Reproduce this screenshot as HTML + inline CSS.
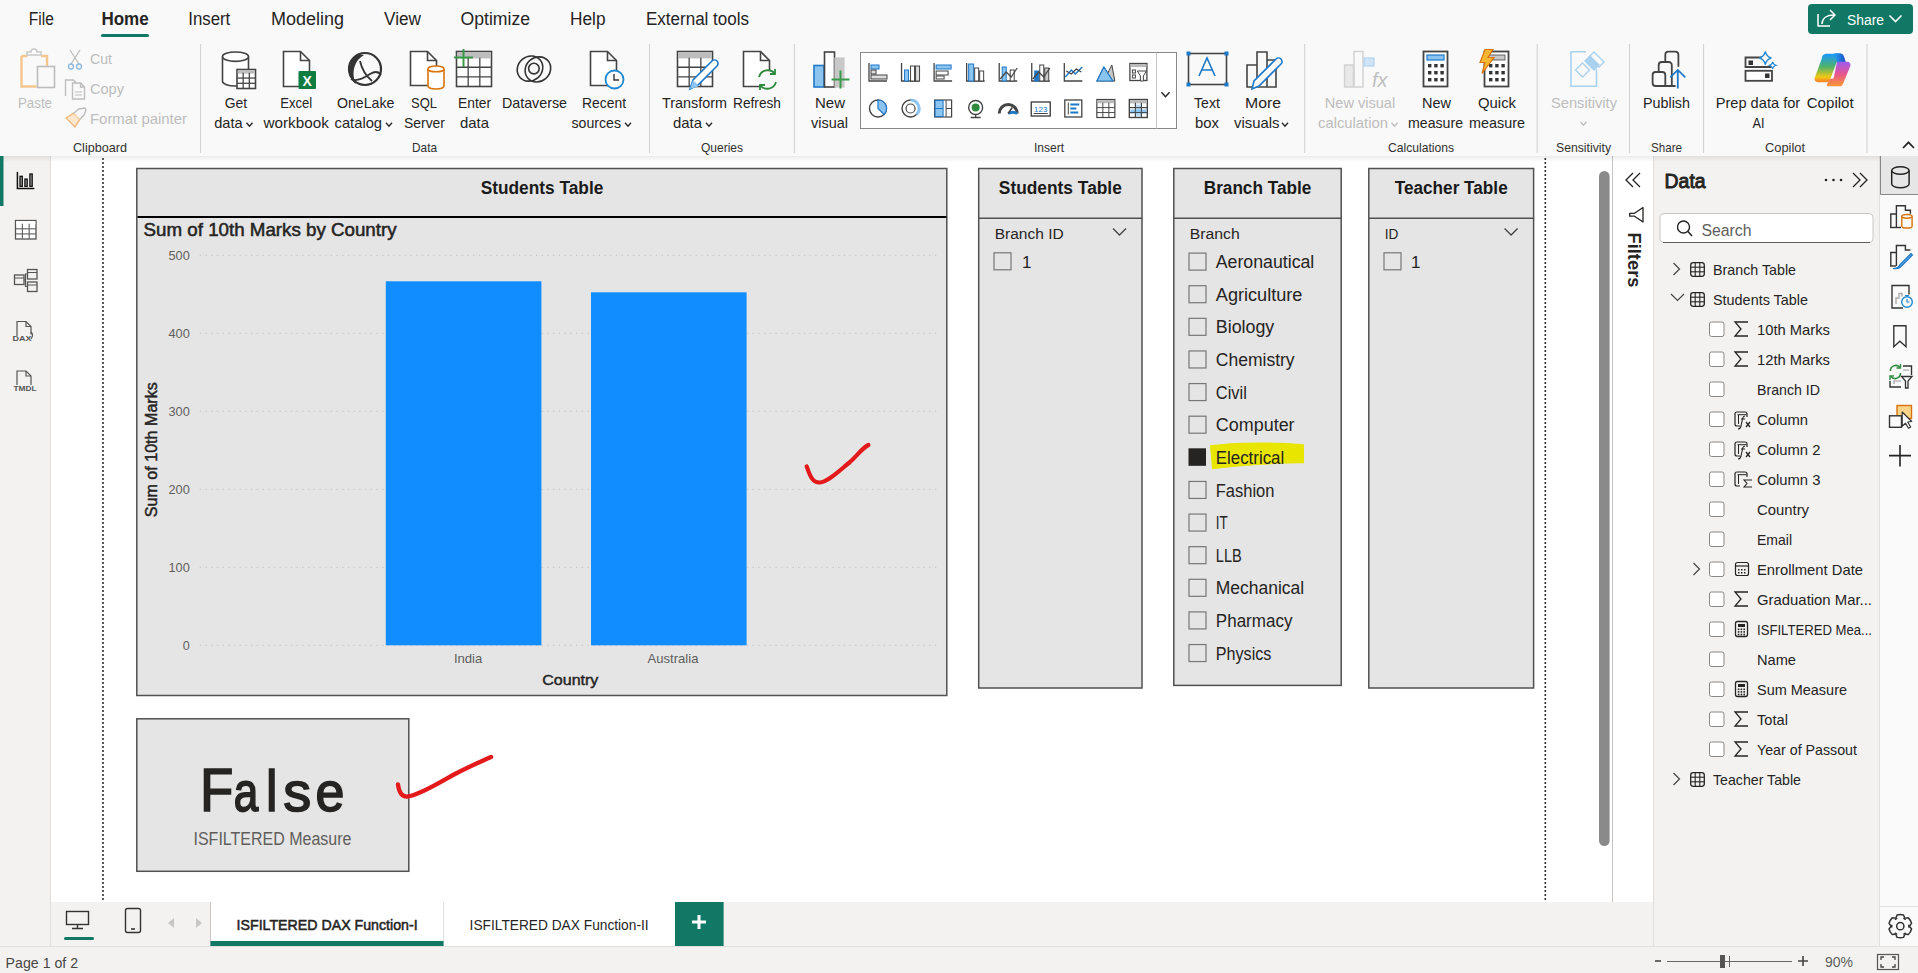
<!DOCTYPE html>
<html><head><meta charset="utf-8"><title>Power BI</title>
<style>
html,body{margin:0;padding:0;width:1918px;height:973px;overflow:hidden;background:#fff}
svg{display:block}
text{font-family:"Liberation Sans", sans-serif}
</style></head><body>
<svg width="1918" height="973" viewBox="0 0 1918 973">
<rect x="0" y="0" width="1918" height="156" fill="#f9f9f9" />
<rect x="0" y="156" width="51" height="790" fill="#f3f2f1" />
<line x1="50.5" y1="156" x2="50.5" y2="946" stroke="#e1dfdd" stroke-width="1" />
<rect x="51" y="156" width="1562" height="746" fill="#ffffff" />
<rect x="1613" y="156" width="40" height="746" fill="#ffffff" />
<line x1="1612.5" y1="156" x2="1612.5" y2="902" stroke="#c8c6c4" stroke-width="1" />
<rect x="1653" y="156" width="227" height="790" fill="#f3f2f1" />
<line x1="1653.5" y1="156" x2="1653.5" y2="946" stroke="#e1dfdd" stroke-width="1" />
<rect x="1880" y="156" width="38" height="790" fill="#fafafa" />
<line x1="1879.5" y1="156" x2="1879.5" y2="946" stroke="#e1dfdd" stroke-width="1" />
<rect x="51" y="902" width="1602" height="44" fill="#f3f2f1" />
<rect x="0" y="946" width="1918" height="27" fill="#f3f2f1" />
<line x1="0" y1="946.5" x2="1918" y2="946.5" stroke="#e1dfdd" stroke-width="1" />
<defs><linearGradient id="sh" x1="0" y1="0" x2="0" y2="1"><stop offset="0" stop-color="#000" stop-opacity="0.08"/><stop offset="1" stop-color="#000" stop-opacity="0"/></linearGradient></defs>
<rect x="0" y="156" width="1880" height="6" fill="url(#sh)" />
<text x="28.8" y="25" font-size="18" fill="#252423" text-anchor="start" textLength="25" lengthAdjust="spacingAndGlyphs" >File</text>
<text x="101.4" y="25" font-size="18" fill="#252423" font-weight="700" text-anchor="start" textLength="47.3" lengthAdjust="spacingAndGlyphs" >Home</text>
<rect x="101" y="34" width="48" height="3" fill="#117865" rx="1.5" />
<text x="188.3" y="25" font-size="18" fill="#252423" text-anchor="start" textLength="42" lengthAdjust="spacingAndGlyphs" >Insert</text>
<text x="271" y="25" font-size="18" fill="#252423" text-anchor="start" textLength="73" lengthAdjust="spacingAndGlyphs" >Modeling</text>
<text x="384" y="25" font-size="18" fill="#252423" text-anchor="start" textLength="37" lengthAdjust="spacingAndGlyphs" >View</text>
<text x="460.5" y="25" font-size="18" fill="#252423" text-anchor="start" textLength="69.5" lengthAdjust="spacingAndGlyphs" >Optimize</text>
<text x="570" y="25" font-size="18" fill="#252423" text-anchor="start" textLength="35.5" lengthAdjust="spacingAndGlyphs" >Help</text>
<text x="646" y="25" font-size="18" fill="#252423" text-anchor="start" textLength="103" lengthAdjust="spacingAndGlyphs" >External tools</text>
<rect x="1808" y="4" width="105" height="30" fill="#117865" rx="4" />
<text x="1847" y="25" font-size="15.5" fill="#ffffff" text-anchor="start" textLength="37" lengthAdjust="spacingAndGlyphs" >Share</text>
<path d="M1889.5,15.5 L1895.5,21.5 L1901.5,15.5" stroke="#ffffff" stroke-width="1.6" fill="none" />
<path d="M1818,14 v12 h12 M1822,24 c0,-6 5,-9 12,-9 M1830,10 l5,5 -5,5" stroke="#ffffff" stroke-width="1.5" fill="none" stroke-linejoin="round"/>
<line x1="200.6" y1="44" x2="200.6" y2="153" stroke="#d2d0ce" stroke-width="1" />
<line x1="649.5" y1="44" x2="649.5" y2="153" stroke="#d2d0ce" stroke-width="1" />
<line x1="794.4" y1="44" x2="794.4" y2="153" stroke="#d2d0ce" stroke-width="1" />
<line x1="1304.7" y1="44" x2="1304.7" y2="153" stroke="#d2d0ce" stroke-width="1" />
<line x1="1537.2" y1="44" x2="1537.2" y2="153" stroke="#d2d0ce" stroke-width="1" />
<line x1="1629.5" y1="44" x2="1629.5" y2="153" stroke="#d2d0ce" stroke-width="1" />
<line x1="1703.6" y1="44" x2="1703.6" y2="153" stroke="#d2d0ce" stroke-width="1" />
<line x1="1867" y1="44" x2="1867" y2="153" stroke="#d2d0ce" stroke-width="1" />
<text x="100" y="152" font-size="12.8" fill="#323130" text-anchor="middle" textLength="54" lengthAdjust="spacingAndGlyphs" >Clipboard</text>
<text x="424.5" y="152" font-size="12.8" fill="#323130" text-anchor="middle" textLength="25" lengthAdjust="spacingAndGlyphs" >Data</text>
<text x="722" y="152" font-size="12.8" fill="#323130" text-anchor="middle" textLength="42" lengthAdjust="spacingAndGlyphs" >Queries</text>
<text x="1049" y="152" font-size="12.8" fill="#323130" text-anchor="middle" textLength="30" lengthAdjust="spacingAndGlyphs" >Insert</text>
<text x="1421" y="152" font-size="12.8" fill="#323130" text-anchor="middle" textLength="66" lengthAdjust="spacingAndGlyphs" >Calculations</text>
<text x="1583.5" y="152" font-size="12.8" fill="#323130" text-anchor="middle" textLength="55" lengthAdjust="spacingAndGlyphs" >Sensitivity</text>
<text x="1666.5" y="152" font-size="12.8" fill="#323130" text-anchor="middle" textLength="31" lengthAdjust="spacingAndGlyphs" >Share</text>
<text x="1785" y="152" font-size="12.8" fill="#323130" text-anchor="middle" textLength="40" lengthAdjust="spacingAndGlyphs" >Copilot</text>
<path d="M1903,148 L1908.5,142.3 L1914,148" stroke="#252423" stroke-width="1.7" fill="none" />
<text x="35" y="108" font-size="14.6" fill="#bdbdbd" text-anchor="middle" textLength="34" lengthAdjust="spacingAndGlyphs" >Paste</text>
<text x="90" y="64" font-size="14.6" fill="#bdbdbd" text-anchor="start" textLength="22" lengthAdjust="spacingAndGlyphs" >Cut</text>
<text x="90" y="94" font-size="14.6" fill="#bdbdbd" text-anchor="start" textLength="34" lengthAdjust="spacingAndGlyphs" >Copy</text>
<text x="90" y="124" font-size="14.6" fill="#bdbdbd" text-anchor="start" textLength="97" lengthAdjust="spacingAndGlyphs" >Format painter</text>
<text x="236" y="108" font-size="14.6" fill="#252423" text-anchor="middle" textLength="22.3" lengthAdjust="spacingAndGlyphs" >Get</text>
<text x="214.2" y="128" font-size="14.6" fill="#252423" text-anchor="start" textLength="28.4" lengthAdjust="spacingAndGlyphs" >data</text>
<path d="M246.5,122.75 L249.5,126.25 L252.5,122.75" stroke="#252423" stroke-width="1.3" fill="none" />
<text x="296.2" y="108" font-size="14.6" fill="#252423" text-anchor="middle" textLength="32" lengthAdjust="spacingAndGlyphs" >Excel</text>
<text x="296.2" y="128" font-size="14.6" fill="#252423" text-anchor="middle" textLength="65.4" lengthAdjust="spacingAndGlyphs" >workbook</text>
<text x="365.7" y="108" font-size="14.6" fill="#252423" text-anchor="middle" textLength="57.4" lengthAdjust="spacingAndGlyphs" >OneLake</text>
<text x="334.6" y="128" font-size="14.6" fill="#252423" text-anchor="start" textLength="47.4" lengthAdjust="spacingAndGlyphs" >catalog</text>
<path d="M386.0,122.75 L389,126.25 L392.0,122.75" stroke="#252423" stroke-width="1.3" fill="none" />
<text x="424" y="108" font-size="14.6" fill="#252423" text-anchor="middle" textLength="26" lengthAdjust="spacingAndGlyphs" >SQL</text>
<text x="424.5" y="128" font-size="14.6" fill="#252423" text-anchor="middle" textLength="41" lengthAdjust="spacingAndGlyphs" >Server</text>
<text x="474.5" y="108" font-size="14.6" fill="#252423" text-anchor="middle" textLength="33" lengthAdjust="spacingAndGlyphs" >Enter</text>
<text x="474.5" y="128" font-size="14.6" fill="#252423" text-anchor="middle" textLength="29" lengthAdjust="spacingAndGlyphs" >data</text>
<text x="534.5" y="108" font-size="14.6" fill="#252423" text-anchor="middle" textLength="65" lengthAdjust="spacingAndGlyphs" >Dataverse</text>
<text x="604" y="108" font-size="14.6" fill="#252423" text-anchor="middle" textLength="44" lengthAdjust="spacingAndGlyphs" >Recent</text>
<text x="571.5" y="128" font-size="14.6" fill="#252423" text-anchor="start" textLength="49.5" lengthAdjust="spacingAndGlyphs" >sources</text>
<path d="M625.0,122.75 L628,126.25 L631.0,122.75" stroke="#252423" stroke-width="1.3" fill="none" />
<text x="694.5" y="108" font-size="14.6" fill="#252423" text-anchor="middle" textLength="65" lengthAdjust="spacingAndGlyphs" >Transform</text>
<text x="673" y="128" font-size="14.6" fill="#252423" text-anchor="start" textLength="29" lengthAdjust="spacingAndGlyphs" >data</text>
<path d="M706.0,122.75 L709,126.25 L712.0,122.75" stroke="#252423" stroke-width="1.3" fill="none" />
<text x="757" y="108" font-size="14.6" fill="#252423" text-anchor="middle" textLength="48" lengthAdjust="spacingAndGlyphs" >Refresh</text>
<text x="830" y="108" font-size="14.6" fill="#252423" text-anchor="middle" textLength="30" lengthAdjust="spacingAndGlyphs" >New</text>
<text x="829.5" y="128" font-size="14.6" fill="#252423" text-anchor="middle" textLength="37" lengthAdjust="spacingAndGlyphs" >visual</text>
<text x="1207" y="108" font-size="14.6" fill="#252423" text-anchor="middle" textLength="26" lengthAdjust="spacingAndGlyphs" >Text</text>
<text x="1207" y="128" font-size="14.6" fill="#252423" text-anchor="middle" textLength="24" lengthAdjust="spacingAndGlyphs" >box</text>
<text x="1263" y="108" font-size="14.6" fill="#252423" text-anchor="middle" textLength="36" lengthAdjust="spacingAndGlyphs" >More</text>
<text x="1234" y="128" font-size="14.6" fill="#252423" text-anchor="start" textLength="45.5" lengthAdjust="spacingAndGlyphs" >visuals</text>
<path d="M1282.0,122.75 L1285,126.25 L1288.0,122.75" stroke="#252423" stroke-width="1.3" fill="none" />
<text x="1360" y="108" font-size="14.6" fill="#bdbdbd" text-anchor="middle" textLength="70.4" lengthAdjust="spacingAndGlyphs" >New visual</text>
<text x="1318" y="128" font-size="14.6" fill="#bdbdbd" text-anchor="start" textLength="70" lengthAdjust="spacingAndGlyphs" >calculation</text>
<path d="M1391.5,122.75 L1394.5,126.25 L1397.5,122.75" stroke="#bdbdbd" stroke-width="1.3" fill="none" />
<text x="1436.5" y="108" font-size="14.6" fill="#252423" text-anchor="middle" textLength="29" lengthAdjust="spacingAndGlyphs" >New</text>
<text x="1435.5" y="128" font-size="14.6" fill="#252423" text-anchor="middle" textLength="55" lengthAdjust="spacingAndGlyphs" >measure</text>
<text x="1497" y="108" font-size="14.6" fill="#252423" text-anchor="middle" textLength="38" lengthAdjust="spacingAndGlyphs" >Quick</text>
<text x="1497" y="128" font-size="14.6" fill="#252423" text-anchor="middle" textLength="56" lengthAdjust="spacingAndGlyphs" >measure</text>
<text x="1584" y="108" font-size="14.6" fill="#bdbdbd" text-anchor="middle" textLength="66" lengthAdjust="spacingAndGlyphs" >Sensitivity</text>
<path d="M1580.5,121.75 L1583.5,125.25 L1586.5,121.75" stroke="#bdbdbd" stroke-width="1.3" fill="none" />
<text x="1666.5" y="108" font-size="14.6" fill="#252423" text-anchor="middle" textLength="47" lengthAdjust="spacingAndGlyphs" >Publish</text>
<text x="1715.7" y="108" font-size="14.6" fill="#252423" text-anchor="start" textLength="84.5" lengthAdjust="spacingAndGlyphs" >Prep data for</text>
<text x="1758.5" y="128" font-size="14.6" fill="#252423" text-anchor="middle" textLength="12" lengthAdjust="spacingAndGlyphs" >AI</text>
<text x="1806.7" y="108" font-size="14.6" fill="#252423" text-anchor="start" textLength="47" lengthAdjust="spacingAndGlyphs" >Copilot</text>
<path d="M21.5,56 h6 M41,56 h6 v10 M21.5,56 v30.5 h15" stroke="#f5c78f" stroke-width="2.4" fill="none" />
<path d="M27,55 h14 v-3 h-4 a3,3 0 0 0 -6,0 h-4 z" stroke="#c8c8c8" stroke-width="1.5" fill="#ffffff" />
<rect x="37.5" y="66.5" width="17" height="21" fill="#f9f9f9" stroke="#bdbdbd" stroke-width="1.6" />
<path d="M70,50 L79,64 M80,50 L71,64" stroke="#bdbdbd" stroke-width="1.3" fill="none" />
<circle cx="71" cy="66.5" r="2.5" stroke="#8fb8de" stroke-width="1.3" fill="none"/><circle cx="79" cy="66.5" r="2.5" stroke="#8fb8de" stroke-width="1.3" fill="none"/>
<path d="M65.5,96 v-16 h8 l3,3" stroke="#bdbdbd" stroke-width="1.4" fill="none" />
<path d="M72.5,83 h8 l4,4 v12 h-12 z" stroke="#bdbdbd" stroke-width="1.4" fill="#f9f9f9" />
<path d="M80.5,83 v4 h4" stroke="#bdbdbd" stroke-width="1.4" fill="none" />
<line x1="75" y1="92" x2="82" y2="92" stroke="#bdbdbd" stroke-width="1" />
<line x1="75" y1="95" x2="82" y2="95" stroke="#bdbdbd" stroke-width="1" />
<path d="M66,118 l8,-5 l6,6 l-5,8 z" stroke="#f0b77c" stroke-width="1.4" fill="#fde6cc" />
<path d="M74,113 l5,-4 l6,-1 l1,2 l-2,5 l-4,4" stroke="#bdbdbd" stroke-width="1.4" fill="#f9f9f9" />
<path d="M222.5,56.68 v24.64 a13.0,4.68 0 0 0 26,0 v-24.64" stroke="#444444" stroke-width="1.6" fill="#ffffff" />
<ellipse cx="235.5" cy="56.68" rx="13.0" ry="4.68" stroke="#444444" stroke-width="1.6" fill="#ffffff"/>
<rect x="237" y="69.5" width="18.5" height="19" fill="#ffffff" stroke="#444444" stroke-width="1.6" />
<rect x="237.8" y="70.3" width="16.9" height="3.3249999999999997" fill="#bdbdbd" />
<line x1="243.16666666666666" y1="72.825" x2="243.16666666666666" y2="88.5" stroke="#444444" stroke-width="1.2800000000000002" />
<line x1="249.33333333333334" y1="72.825" x2="249.33333333333334" y2="88.5" stroke="#444444" stroke-width="1.2800000000000002" />
<line x1="237" y1="78.05" x2="255.5" y2="78.05" stroke="#444444" stroke-width="1.2800000000000002" />
<line x1="237" y1="83.275" x2="255.5" y2="83.275" stroke="#444444" stroke-width="1.2800000000000002" />
<path d="M283.5,51.5 h17 l9,9 v26 h-26 z" stroke="#444444" stroke-width="1.6" fill="#ffffff" />
<path d="M300.5,51.5 v9 h9" stroke="#444444" stroke-width="1.6" fill="none" />
<rect x="298.5" y="71" width="17.5" height="18" fill="#107c41" rx="1" />
<text x="307.2" y="86" font-size="14" fill="#ffffff" font-weight="700" text-anchor="middle" >X</text>
<circle cx="365" cy="69" r="16" stroke="#333" stroke-width="2.2" fill="none"/>
<path d="M358,54 C348,58 347,78 356,84 C352,76 352,62 364,55 Z" stroke="none" stroke-width="1" fill="#333" />
<path d="M360,61 C362,70 366,76 372,81 M351,79 C356,82 364,78 370,74 C375,71 379,72 381,75" stroke="#333" stroke-width="1.8" fill="none" />
<path d="M410.5,51.5 h17 l9,9 v25 h-26 z" stroke="#444444" stroke-width="1.6" fill="#ffffff" />
<path d="M427.5,51.5 v9 h9" stroke="#444444" stroke-width="1.6" fill="none" />
<path d="M428,68.88 v17.240000000000002 a8.0,2.88 0 0 0 16,0 v-17.240000000000002" stroke="#d9730d" stroke-width="1.6" fill="#ffffff" />
<ellipse cx="436.0" cy="68.88" rx="8.0" ry="2.88" stroke="#d9730d" stroke-width="1.6" fill="#ffffff"/>
<rect x="456.5" y="51.5" width="35" height="35" fill="#ffffff" stroke="#444444" stroke-width="1.6" />
<rect x="457.3" y="52.3" width="33.4" height="6.125" fill="#bdbdbd" />
<line x1="468.1666666666667" y1="57.625" x2="468.1666666666667" y2="86.5" stroke="#444444" stroke-width="1.2800000000000002" />
<line x1="479.8333333333333" y1="57.625" x2="479.8333333333333" y2="86.5" stroke="#444444" stroke-width="1.2800000000000002" />
<line x1="456.5" y1="67.25" x2="491.5" y2="67.25" stroke="#444444" stroke-width="1.2800000000000002" />
<line x1="456.5" y1="76.875" x2="491.5" y2="76.875" stroke="#444444" stroke-width="1.2800000000000002" />
<path d="M454,57.5 h19 M463.5,49 v18" stroke="#3a9a4a" stroke-width="2" fill="none" />
<circle cx="533.9" cy="68.6" r="5.3" stroke="#333" stroke-width="1.6" fill="none"/>
<ellipse cx="530" cy="68.6" rx="13.3" ry="12" transform="rotate(-40 530 68.6)" stroke="#333" stroke-width="1.6" fill="none"/>
<ellipse cx="537.9" cy="69.4" rx="13.3" ry="12" transform="rotate(-40 537.9 69.4)" stroke="#333" stroke-width="1.6" fill="none"/>
<path d="M590.5,51.5 h17 l9,9 v25 h-26 z" stroke="#444444" stroke-width="1.6" fill="#ffffff" />
<path d="M607.5,51.5 v9 h9" stroke="#444444" stroke-width="1.6" fill="none" />
<circle cx="614.5" cy="79.5" r="9" stroke="#1e88d2" stroke-width="1.8" fill="#ffffff"/>
<path d="M614,74 v6 h5" stroke="#333" stroke-width="1.4" fill="none" />
<rect x="677.5" y="51.5" width="35" height="35" fill="#ffffff" stroke="#444444" stroke-width="1.6" />
<rect x="678.3" y="52.3" width="33.4" height="6.125" fill="#bdbdbd" />
<line x1="689.1666666666666" y1="57.625" x2="689.1666666666666" y2="86.5" stroke="#444444" stroke-width="1.2800000000000002" />
<line x1="700.8333333333334" y1="57.625" x2="700.8333333333334" y2="86.5" stroke="#444444" stroke-width="1.2800000000000002" />
<line x1="677.5" y1="67.25" x2="712.5" y2="67.25" stroke="#444444" stroke-width="1.2800000000000002" />
<line x1="677.5" y1="76.875" x2="712.5" y2="76.875" stroke="#444444" stroke-width="1.2800000000000002" />
<path d="M690,89 l3,-9 l19,-19 a3,3 0 0 1 5,5 l-19,19 z" stroke="#1e78c8" stroke-width="1.6" fill="#ffffff" />
<path d="M690,89 l3,-9 l6,6 z" stroke="none" stroke-width="1" fill="#8cc4f0" />
<path d="M743.5,51.5 h17 l9,9 v26 h-26 z" stroke="#444444" stroke-width="1.6" fill="#ffffff" />
<path d="M760.5,51.5 v9 h9" stroke="#444444" stroke-width="1.6" fill="none" />
<circle cx="767.5" cy="79.5" r="9.5" fill="#f9f9f9"/>
<path d="M759,77 a9,9 0 0 1 16,-3 M776,82 a9,9 0 0 1 -16,3" stroke="#2e8b3e" stroke-width="1.8" fill="none" />
<path d="M775,69 v5 h-5 M760,90 v-5 h5" stroke="#2e8b3e" stroke-width="1.8" fill="none" />
<rect x="814" y="65.5" width="10" height="21.5" fill="#8cc4f0" stroke="#1e78c8" stroke-width="1.6" />
<rect x="824.5" y="52" width="10" height="35" fill="#ffffff" stroke="#444444" stroke-width="1.6" />
<rect x="835" y="58" width="9" height="29" fill="#c8c8c8" stroke="#c8c8c8" stroke-width="1.2" />
<path d="M831.5,79.5 h18 M840.5,70.5 v18" stroke="#3a9a4a" stroke-width="2" fill="none" />
<rect x="860.5" y="52.5" width="316" height="76" fill="#ffffff" stroke="#8a8886" stroke-width="1" />
<line x1="1156.5" y1="52.5" x2="1156.5" y2="128.5" stroke="#c8c6c4" stroke-width="1" />
<path d="M1161.5,92.25 L1165.5,96.75 L1169.5,92.25" stroke="#252423" stroke-width="1.4" fill="none" />
<path d="M869.0,63 v18 h18" stroke="#444444" stroke-width="1.3" fill="none" />
<rect x="871.0" y="65" width="8" height="4" fill="#8cc4f0" stroke="#1e78c8" stroke-width="1" />
<rect x="871.0" y="70" width="5" height="4" fill="#ddd" stroke="#444444" stroke-width="1" />
<rect x="871.0" y="75" width="16" height="4" fill="#ddd" stroke="#444444" stroke-width="1" />
<path d="M901.55,63 v18 h18" stroke="#444444" stroke-width="1.3" fill="none" />
<rect x="904.55" y="70" width="4" height="11" fill="#8cc4f0" stroke="#1e78c8" stroke-width="1" />
<rect x="910.55" y="66" width="4" height="15" fill="#fff" stroke="#444444" stroke-width="1" />
<rect x="915.55" y="66" width="4" height="15" fill="#ddd" stroke="#444444" stroke-width="1" />
<path d="M934.1,63 v18 h18" stroke="#444444" stroke-width="1.3" fill="none" />
<rect x="936.1" y="65" width="15" height="4" fill="#8cc4f0" stroke="#1e78c8" stroke-width="1" />
<rect x="936.1" y="71" width="12" height="4" fill="#fff" stroke="#444444" stroke-width="1" />
<rect x="936.1" y="76" width="8" height="3" fill="#fff" stroke="#444444" stroke-width="1" />
<path d="M966.65,63 v18 h18" stroke="#444444" stroke-width="1.3" fill="none" />
<rect x="968.65" y="64" width="5" height="17" fill="#8cc4f0" stroke="#1e78c8" stroke-width="1" />
<rect x="974.65" y="68" width="4" height="13" fill="#fff" stroke="#444444" stroke-width="1" />
<rect x="979.65" y="71" width="4" height="10" fill="#fff" stroke="#444444" stroke-width="1" />
<path d="M999.2,63 v18 h18" stroke="#444444" stroke-width="1.3" fill="none" />
<rect x="1002.2" y="67" width="4" height="14" fill="#8cc4f0" stroke="#1e78c8" stroke-width="1" />
<rect x="1010.2" y="70" width="4" height="11" fill="#fff" stroke="#444444" stroke-width="1" />
<path d="M1000.2,79 l6,-7 l5,5 l6,-9" stroke="#444444" stroke-width="1.2" fill="none" />
<path d="M1031.75,63 v18 h18" stroke="#444444" stroke-width="1.3" fill="none" />
<rect x="1034.75" y="71" width="4" height="10" fill="#1e78c8" stroke="#1e78c8" stroke-width="1" />
<rect x="1039.75" y="65" width="4" height="16" fill="#fff" stroke="#444444" stroke-width="1" />
<rect x="1044.75" y="68" width="4" height="13" fill="#ccc" stroke="#444444" stroke-width="1" />
<path d="M1032.75,79 l6,-7 l5,5 l6,-9" stroke="#444444" stroke-width="1.2" fill="none" />
<path d="M1064.3,63 v18 h18" stroke="#444444" stroke-width="1.3" fill="none" />
<path d="M1065.3,77 l6,-7 l4,4 l7,-7" stroke="#1e78c8" stroke-width="1.4" fill="none" />
<path d="M1066.3,71 l5,3 l5,-5 l5,3" stroke="#444444" stroke-width="1.2" fill="none" />
<path d="M1096.85,81 l7,-14 l4,6 l4,-8 l3,16 z" stroke="#444444" stroke-width="1" fill="#c8c8c8" />
<path d="M1096.85,81 l7,-14 l9,14 z" stroke="#1e78c8" stroke-width="1.2" fill="#8cc4f0" />
<rect x="1129.9" y="63.5" width="17" height="17" fill="#fff" stroke="#444444" stroke-width="1.3" />
<rect x="1130.4" y="64" width="16" height="3" fill="#bbb" />
<path d="M1137.4,71 h9 l-3,5 v5 h-3 v-5 z" stroke="#444444" stroke-width="1" fill="#fff" />
<rect x="1132.4" y="70" width="3" height="3" fill="#fff" stroke="#444444" stroke-width="1" />
<rect x="1132.4" y="75" width="3" height="3" fill="#fff" stroke="#444444" stroke-width="1" />
<circle cx="878.0" cy="108.5" r="8.5" stroke="#444444" stroke-width="1.4" fill="#fff"/>
<path d="M878.0,108.5 v-8.5 a8.5,8.5 0 0 1 6,14.5 z" stroke="#1e78c8" stroke-width="1.2" fill="#8cc4f0" />
<circle cx="910.55" cy="108.5" r="8.5" stroke="#444444" stroke-width="1.4" fill="#fff"/><circle cx="910.55" cy="108.5" r="4.5" stroke="#444444" stroke-width="1.2" fill="#fff"/>
<path d="M910.55,100.0 a8.5,8.5 0 0 1 6,14.5" stroke="#8cc4f0" stroke-width="3" fill="none" />
<rect x="934.6" y="100.0" width="17" height="17" fill="#fff" stroke="#444444" stroke-width="1.2" />
<rect x="935.1" y="100.5" width="8" height="16" fill="#8cc4f0" stroke="#1e78c8" stroke-width="1" />
<line x1="935.1" y1="108.5" x2="943.1" y2="108.5" stroke="#1e78c8" stroke-width="1" />
<line x1="946.1" y1="100.5" x2="946.1" y2="116.5" stroke="#444444" stroke-width="1" />
<line x1="946.1" y1="108.5" x2="951.1" y2="108.5" stroke="#444444" stroke-width="1" />
<circle cx="975.65" cy="107.5" r="7" stroke="#444444" stroke-width="1.4" fill="#fff"/><circle cx="975.65" cy="107.5" r="4" fill="#2e8b3e"/>
<path d="M970.65,117.5 h10 M975.65,114.5 v3" stroke="#444444" stroke-width="1.3" fill="none" />
<path d="M999.2,113.5 a9,9 0 0 1 18,0" stroke="#444444" stroke-width="3" fill="none" />
<path d="M1008.2,113.5 a9,9 0 0 1 9,0" stroke="#1e78c8" stroke-width="3" fill="none" />
<line x1="1008.2" y1="113.5" x2="1012.2" y2="107.5" stroke="#444444" stroke-width="1.6" />
<rect x="1031.25" y="102.0" width="19" height="14" fill="#fff" stroke="#444444" stroke-width="1.4" />
<text x="1040.75" y="111.5" font-size="8" fill="#1e78c8" text-anchor="middle" >123</text>
<line x1="1033.75" y1="113.5" x2="1047.75" y2="113.5" stroke="#444444" stroke-width="1" />
<rect x="1064.8" y="100.0" width="17" height="17" fill="#fff" stroke="#444444" stroke-width="1.3" />
<line x1="1068.3" y1="102.5" x2="1068.3" y2="114.5" stroke="#444444" stroke-width="1" />
<rect x="1070.3" y="103.5" width="9" height="2" fill="#1e78c8" />
<rect x="1070.3" y="107.5" width="6" height="2" fill="#1e78c8" />
<rect x="1070.3" y="111.5" width="8" height="2" fill="#1e78c8" />
<rect x="1096.85" y="99.5" width="18" height="18" fill="#ffffff" stroke="#444444" stroke-width="1.2" />
<rect x="1097.4499999999998" y="100.1" width="16.8" height="3.15" fill="#bbb" />
<line x1="1102.85" y1="102.65" x2="1102.85" y2="117.5" stroke="#444444" stroke-width="0.96" />
<line x1="1108.85" y1="102.65" x2="1108.85" y2="117.5" stroke="#444444" stroke-width="0.96" />
<line x1="1096.85" y1="107.60000000000001" x2="1114.85" y2="107.60000000000001" stroke="#444444" stroke-width="0.96" />
<line x1="1096.85" y1="112.55000000000001" x2="1114.85" y2="112.55000000000001" stroke="#444444" stroke-width="0.96" />
<rect x="1129.4" y="99.5" width="18" height="18" fill="#ffffff" stroke="#444444" stroke-width="1.2" />
<rect x="1130.0" y="100.1" width="16.8" height="3.15" fill="#bbb" />
<line x1="1135.4" y1="102.65" x2="1135.4" y2="117.5" stroke="#444444" stroke-width="0.96" />
<line x1="1141.4" y1="102.65" x2="1141.4" y2="117.5" stroke="#444444" stroke-width="0.96" />
<line x1="1129.4" y1="107.60000000000001" x2="1147.4" y2="107.60000000000001" stroke="#444444" stroke-width="0.96" />
<line x1="1129.4" y1="112.55000000000001" x2="1147.4" y2="112.55000000000001" stroke="#444444" stroke-width="0.96" />
<rect x="1130.4" y="109.5" width="16" height="4" fill="#8cc4f0" />
<rect x="1135.4" y="104.5" width="6" height="12" fill="#8cc4f0" opacity="0.6"/>
<rect x="1129.4" y="99.5" width="18" height="18" fill="none" stroke="#444444" stroke-width="1.2" />
<rect x="1130.0" y="100.1" width="16.8" height="3.15" fill="#bbb" />
<line x1="1135.4" y1="102.65" x2="1135.4" y2="117.5" stroke="#444444" stroke-width="0.96" />
<line x1="1141.4" y1="102.65" x2="1141.4" y2="117.5" stroke="#444444" stroke-width="0.96" />
<line x1="1129.4" y1="107.60000000000001" x2="1147.4" y2="107.60000000000001" stroke="#444444" stroke-width="0.96" />
<line x1="1129.4" y1="112.55000000000001" x2="1147.4" y2="112.55000000000001" stroke="#444444" stroke-width="0.96" />
<rect x="1188.5" y="53.5" width="38" height="31" fill="none" stroke="#444444" stroke-width="1.6" />
<rect x="1186.5" y="51.5" width="4" height="4" fill="#1e78c8" />
<rect x="1224.5" y="51.5" width="4" height="4" fill="#1e78c8" />
<rect x="1186.5" y="82.5" width="4" height="4" fill="#1e78c8" />
<rect x="1224.5" y="82.5" width="4" height="4" fill="#1e78c8" />
<path d="M1199,76 L1207,58 L1215,76 M1202,70 h10" stroke="#1e78c8" stroke-width="1.6" fill="none" />
<path d="M1247,87 v-22 h10 v22 z M1257,87 v-35 h10 v35 M1267,60 h9 v27 h-29" stroke="#444444" stroke-width="1.6" fill="none" />
<path d="M1252,89 l2,-8 l22,-22 a3,3 0 0 1 5,5 l-22,22 z" stroke="#1e78c8" stroke-width="1.6" fill="#f9f9f9" />
<rect x="1344.5" y="65" width="9" height="22" fill="#e8e8e8" stroke="#d0d0d0" stroke-width="1.4" />
<rect x="1354" y="51.5" width="9" height="35.5" fill="none" stroke="#d0d0d0" stroke-width="1.4" />
<rect x="1364" y="58" width="10" height="8" fill="#cfe4f7" stroke="#a8cdef" stroke-width="1" />
<text x="1372" y="87" font-size="20" fill="#c0c0c0" text-anchor="start" font-style="italic" font-family="Liberation Serif, serif">fx</text>
<rect x="1423.5" y="51.5" width="24" height="35" fill="#ffffff" stroke="#444444" stroke-width="1.8" />
<rect x="1427" y="55" width="17" height="5" fill="#8cc4f0" stroke="#1e78c8" stroke-width="1.2" />
<rect x="1428.0" y="64" width="3.4" height="3.4" fill="#333" />
<rect x="1434.2" y="64" width="3.4" height="3.4" fill="#333" />
<rect x="1440.4" y="64" width="3.4" height="3.4" fill="#333" />
<rect x="1428.0" y="71" width="3.4" height="3.4" fill="#333" />
<rect x="1434.2" y="71" width="3.4" height="3.4" fill="#333" />
<rect x="1440.4" y="71" width="3.4" height="3.4" fill="#333" />
<rect x="1428.0" y="78" width="3.4" height="3.4" fill="#333" />
<rect x="1434.2" y="78" width="3.4" height="3.4" fill="#333" />
<rect x="1440.4" y="78" width="3.4" height="3.4" fill="#333" />
<rect x="1484.5" y="51.5" width="24" height="35" fill="#ffffff" stroke="#444444" stroke-width="1.8" />
<rect x="1488" y="55" width="17" height="5" fill="#c8c8c8" stroke="#444444" stroke-width="0.8" />
<rect x="1489.0" y="64" width="3.4" height="3.4" fill="#333" />
<rect x="1495.2" y="64" width="3.4" height="3.4" fill="#333" />
<rect x="1501.4" y="64" width="3.4" height="3.4" fill="#333" />
<rect x="1489.0" y="71" width="3.4" height="3.4" fill="#333" />
<rect x="1495.2" y="71" width="3.4" height="3.4" fill="#333" />
<rect x="1501.4" y="71" width="3.4" height="3.4" fill="#333" />
<rect x="1489.0" y="78" width="3.4" height="3.4" fill="#333" />
<rect x="1495.2" y="78" width="3.4" height="3.4" fill="#333" />
<rect x="1501.4" y="78" width="3.4" height="3.4" fill="#333" />
<path d="M1485,49.5 h8 l-5,8 h6 l-12,16 l3,-11 h-5 z" stroke="#d9730d" stroke-width="1.2" fill="#f7b731" />
<path d="M1586,51.8 h-15 v34.5 h25.5 v-17" stroke="#a9d2ef" stroke-width="1.6" fill="none" />
<path d="M1589,57 l5,-5 l10,10 l-5,5 z" stroke="#a9d2ef" stroke-width="1.4" fill="#f9f9f9" />
<path d="M1585,61 l5,-5 l9,9 l-5,5 z" stroke="#a9d2ef" stroke-width="1.4" fill="#a9d2ef" />
<path d="M1576,66 l7,-7 l7,7 l-7,7 z" stroke="#a9d2ef" stroke-width="1.4" fill="#f9f9f9" transform="translate(-0.5,4)"/>
<path d="M1665.3,86 v-11 a3,3 0 0 0 -3,-3 h-6.7 a3,3 0 0 0 -3,3 v8 a3,3 0 0 0 3,3 h20" stroke="#444444" stroke-width="1.8" fill="none" />
<path d="M1658.7,72 v-7 a3,3 0 0 1 3,-3 h7.1 a3,3 0 0 1 3,3 v21" stroke="#444444" stroke-width="1.8" fill="none" />
<path d="M1665.3,62 v-7.3 a3,3 0 0 1 3,-3 h7.1 a3,3 0 0 1 3,3 v12" stroke="#444444" stroke-width="1.8" fill="none" />
<path d="M1677.8,88.5 v-18.5 M1670.3,77.4 l7.5,-7.5 l7.5,7.5" stroke="#1e78c8" stroke-width="1.8" fill="none" />
<path d="M1764,57.5 h-18.5 v9.5 h26" stroke="#444444" stroke-width="1.8" fill="none" />
<rect x="1745.5" y="70.8" width="26.5" height="10" fill="#ffffff" stroke="#444444" stroke-width="1.8" />
<rect x="1748.5" y="60.5" width="4.5" height="4.5" fill="#333" />
<rect x="1765" y="73.5" width="4.5" height="4.5" fill="#333" />
<path d="M1765.3,51.5 q1.2,5.3 6,6.5 q-4.8,1.2 -6,6.5 q-1.2,-5.3 -6,-6.5 q4.8,-1.2 6,-6.5 z" stroke="#1e88d2" stroke-width="1.3" fill="#f9f9f9" />
<path d="M1772.7,61.8 q0.7,2.8 3.4,3.5 q-2.7,0.7 -3.4,3.5 q-0.7,-2.8 -3.4,-3.5 q2.7,-0.7 3.4,-3.5 z" stroke="#1e88d2" stroke-width="1.1" fill="#f9f9f9" />
<defs>
<linearGradient id="cp1" x1="0" y1="0" x2="0" y2="1"><stop offset="0" stop-color="#1d9bf0"/><stop offset="0.45" stop-color="#4fb36a"/><stop offset="0.85" stop-color="#f2c811"/><stop offset="1" stop-color="#f58a2a"/></linearGradient>
<linearGradient id="cp2" x1="0" y1="0" x2="0" y2="1"><stop offset="0" stop-color="#a35ce8"/><stop offset="0.5" stop-color="#e8548f"/><stop offset="1" stop-color="#f7923a"/></linearGradient>
<linearGradient id="cp3" x1="0" y1="0" x2="1" y2="0"><stop offset="0" stop-color="#1d9bf0"/><stop offset="1" stop-color="#2052c8"/></linearGradient>
</defs>
<path d="M1826,55 h12 l3,6 h-3 a3,3 0 0 0 -3,2 l-6,16 a3,3 0 0 1 -3,2 h-8 a2,2 0 0 1 -2,-3 l7,-19 a4,4 0 0 1 3,-4 z" stroke="url(#cp1)" stroke-width="2.5" fill="url(#cp1)" stroke-linejoin="round"/>
<path d="M1835,54 h5 a3,3 0 0 1 3,2 l2,6 h-7 z" stroke="url(#cp3)" stroke-width="1.5" fill="url(#cp3)" stroke-linejoin="round"/>
<path d="M1838,63 h9 a2,2 0 0 1 2,3 l-7,17 a3,3 0 0 1 -3,2 h-11 l3,-5 h1 a3,3 0 0 0 3,-2 z" stroke="url(#cp2)" stroke-width="2.5" fill="url(#cp2)" stroke-linejoin="round"/>
<rect x="0" y="156" width="3.5" height="50" fill="#117865" />
<path d="M17.4,172.4 v16 h16.4" stroke="#111" stroke-width="1.5" fill="none" stroke-linecap="round"/>
<rect x="20" y="176.3" width="2.3" height="10" fill="#aaa" stroke="#111" stroke-width="1.3" />
<rect x="24.9" y="179.1" width="2.3" height="7.2" fill="#aaa" stroke="#111" stroke-width="1.3" />
<rect x="29.9" y="174" width="2.3" height="12.3" fill="#aaa" stroke="#111" stroke-width="1.3" />
<rect x="15.5" y="220.5" width="20.5" height="18.5" fill="#ffffff" stroke="#555" stroke-width="1.3" />
<rect x="16.15" y="221.15" width="19.2" height="3.2375" fill="#ffffff" />
<line x1="22.333333333333332" y1="223.7375" x2="22.333333333333332" y2="239.0" stroke="#555" stroke-width="1.04" />
<line x1="29.166666666666664" y1="223.7375" x2="29.166666666666664" y2="239.0" stroke="#555" stroke-width="1.04" />
<line x1="15.5" y1="228.82500000000002" x2="36.0" y2="228.82500000000002" stroke="#555" stroke-width="1.04" />
<line x1="15.5" y1="233.91250000000002" x2="36.0" y2="233.91250000000002" stroke="#555" stroke-width="1.04" />
<rect x="14.5" y="275" width="9.5" height="9.5" fill="none" stroke="#555" stroke-width="1.3" />
<line x1="14.5" y1="278" x2="24.0" y2="278" stroke="#555" stroke-width="1" />
<rect x="27.5" y="269.5" width="9.5" height="9.5" fill="none" stroke="#555" stroke-width="1.3" />
<line x1="27.5" y1="272.5" x2="37.0" y2="272.5" stroke="#555" stroke-width="1" />
<rect x="27.5" y="282" width="9.5" height="9.5" fill="none" stroke="#555" stroke-width="1.3" />
<line x1="27.5" y1="285" x2="37.0" y2="285" stroke="#555" stroke-width="1" />
<path d="M24,280 h1.5 v-6 h2 M25.5,280 v6.5 h2" stroke="#555" stroke-width="1.2" fill="none" />
<path d="M17,336 v-14.5 h9 l5,5 v8" stroke="#555" stroke-width="1.2" fill="none" />
<path d="M26,321.5 v5 h5" stroke="#555" stroke-width="1.2" fill="none" />
<text x="12.5" y="341" font-size="7.5" fill="#555" font-weight="700" text-anchor="start" textLength="19" lengthAdjust="spacingAndGlyphs" >DAX</text>
<path d="M31,332 q3,3 0,7" stroke="#555" stroke-width="1.2" fill="none" />
<path d="M17,385 v-14 h9 l5,5 v9" stroke="#555" stroke-width="1.2" fill="none" />
<path d="M26,371 v5 h5" stroke="#555" stroke-width="1.2" fill="none" />
<text x="13.5" y="390.5" font-size="7.5" fill="#555" font-weight="700" text-anchor="start" textLength="23" lengthAdjust="spacingAndGlyphs" >TMDL</text>
<line x1="103" y1="158" x2="103" y2="900" stroke="#333333" stroke-width="1.6" stroke-dasharray="2 2"/>
<line x1="1545.3" y1="158" x2="1545.3" y2="900" stroke="#333333" stroke-width="1.6" stroke-dasharray="2 2"/>
<rect x="136.8" y="168.5" width="810" height="527" fill="#e5e5e5" stroke="#505050" stroke-width="1.5" />
<rect x="137.5" y="216" width="809" height="2" fill="#000000" />
<text x="542" y="193.5" font-size="17.5" fill="#1a1a1a" font-weight="700" text-anchor="middle" textLength="122.7" lengthAdjust="spacingAndGlyphs" >Students Table</text>
<text x="143.6" y="235.8" font-size="17.8" fill="#252423" text-anchor="start" textLength="253" lengthAdjust="spacingAndGlyphs" stroke="#252423" stroke-width="0.5">Sum of 10th Marks by Country</text>
<line x1="199.7" y1="255.3" x2="939" y2="255.3" stroke="#c8c8c8" stroke-width="1.2" stroke-dasharray="1.3 4.4"/>
<text x="189.8" y="259.7" font-size="13" fill="#605e5c" text-anchor="end" textLength="21.3" lengthAdjust="spacingAndGlyphs" >500</text>
<line x1="199.7" y1="333.3" x2="939" y2="333.3" stroke="#c8c8c8" stroke-width="1.2" stroke-dasharray="1.3 4.4"/>
<text x="189.8" y="337.7" font-size="13" fill="#605e5c" text-anchor="end" textLength="21.3" lengthAdjust="spacingAndGlyphs" >400</text>
<line x1="199.7" y1="411.3" x2="939" y2="411.3" stroke="#c8c8c8" stroke-width="1.2" stroke-dasharray="1.3 4.4"/>
<text x="189.8" y="415.7" font-size="13" fill="#605e5c" text-anchor="end" textLength="21.3" lengthAdjust="spacingAndGlyphs" >300</text>
<line x1="199.7" y1="489.3" x2="939" y2="489.3" stroke="#c8c8c8" stroke-width="1.2" stroke-dasharray="1.3 4.4"/>
<text x="189.8" y="493.7" font-size="13" fill="#605e5c" text-anchor="end" textLength="21.3" lengthAdjust="spacingAndGlyphs" >200</text>
<line x1="199.7" y1="567.3" x2="939" y2="567.3" stroke="#c8c8c8" stroke-width="1.2" stroke-dasharray="1.3 4.4"/>
<text x="189.8" y="571.6999999999999" font-size="13" fill="#605e5c" text-anchor="end" textLength="21.3" lengthAdjust="spacingAndGlyphs" >100</text>
<line x1="199.7" y1="645.3" x2="939" y2="645.3" stroke="#c8c8c8" stroke-width="1.2" stroke-dasharray="1.3 4.4"/>
<text x="189.8" y="649.6999999999999" font-size="13" fill="#605e5c" text-anchor="end" textLength="7" lengthAdjust="spacingAndGlyphs" >0</text>
<rect x="385.8" y="281.3" width="155.6" height="364" fill="#118dff" />
<rect x="591" y="292.3" width="155.6" height="353" fill="#118dff" />
<text x="453.9" y="663" font-size="13" fill="#605e5c" text-anchor="start" textLength="28.4" lengthAdjust="spacingAndGlyphs" >India</text>
<text x="647.6" y="663" font-size="13" fill="#605e5c" text-anchor="start" textLength="50.8" lengthAdjust="spacingAndGlyphs" >Australia</text>
<text x="542.2" y="684.5" font-size="15.5" fill="#252423" text-anchor="start" textLength="56.2" lengthAdjust="spacingAndGlyphs" stroke="#252423" stroke-width="0.45">Country</text>
<text x="157.4" y="449.7" font-size="16" fill="#252423" text-anchor="middle" textLength="135" lengthAdjust="spacingAndGlyphs" stroke="#252423" stroke-width="0.45" transform="rotate(-90 157.4 449.7)">Sum of 10th Marks</text>
<path d="M806.7,466.5 C809,472 811,483 820,482.5 C828,482 840,470 850,462 C858,455 862,448 868.4,445" stroke="#e3191b" stroke-width="4.2" fill="none" stroke-linecap="round" stroke-linejoin="round"/>
<rect x="978.7" y="168.5" width="163.29999999999995" height="519.5" fill="#e5e5e5" stroke="#505050" stroke-width="1.5" />
<line x1="978.7" y1="218.2" x2="1142" y2="218.2" stroke="#505050" stroke-width="1.5" />
<text x="1060.35" y="193.6" font-size="17.5" fill="#1a1a1a" font-weight="700" text-anchor="middle" textLength="123" lengthAdjust="spacingAndGlyphs" >Students Table</text>
<text x="994.7" y="238.8" font-size="15.5" fill="#252423" text-anchor="start" textLength="69" lengthAdjust="spacingAndGlyphs" >Branch ID</text>
<path d="M1113,228.5 l6.5,6.5 l6.5,-6.5" stroke="#444" stroke-width="1.3" fill="none" />
<rect x="994" y="252.8" width="17" height="17" fill="none" stroke="#777" stroke-width="1.2" />
<text x="1022" y="267.6" font-size="17" fill="#252423" text-anchor="start" >1</text>
<rect x="1368.8" y="168.5" width="164.79999999999995" height="519.5" fill="#e5e5e5" stroke="#505050" stroke-width="1.5" />
<line x1="1368.8" y1="218.2" x2="1533.6" y2="218.2" stroke="#505050" stroke-width="1.5" />
<text x="1451.1999999999998" y="193.6" font-size="17.5" fill="#1a1a1a" font-weight="700" text-anchor="middle" textLength="113" lengthAdjust="spacingAndGlyphs" >Teacher Table</text>
<text x="1384.8" y="238.8" font-size="15.5" fill="#252423" text-anchor="start" textLength="13.7" lengthAdjust="spacingAndGlyphs" >ID</text>
<path d="M1504.6,228.5 l6.5,6.5 l6.5,-6.5" stroke="#444" stroke-width="1.3" fill="none" />
<rect x="1384" y="252.8" width="17" height="17" fill="none" stroke="#777" stroke-width="1.2" />
<text x="1411" y="267.6" font-size="17" fill="#252423" text-anchor="start" >1</text>
<rect x="1173.8" y="168.5" width="167.4000000000001" height="516.9" fill="#e5e5e5" stroke="#505050" stroke-width="1.5" />
<line x1="1173.8" y1="218.2" x2="1341.2" y2="218.2" stroke="#505050" stroke-width="1.5" />
<text x="1257.5" y="193.6" font-size="17.5" fill="#1a1a1a" font-weight="700" text-anchor="middle" textLength="107.5" lengthAdjust="spacingAndGlyphs" >Branch Table</text>
<text x="1189.8" y="238.8" font-size="15.5" fill="#252423" text-anchor="start" textLength="50" lengthAdjust="spacingAndGlyphs" >Branch</text>
<rect x="1189" y="253.1" width="17" height="17" fill="none" stroke="#777" stroke-width="1.2" />
<text x="1215.8" y="268.2" font-size="18.3" fill="#252423" text-anchor="start" textLength="98.5" lengthAdjust="spacingAndGlyphs" >Aeronautical</text>
<rect x="1189" y="285.71999999999997" width="17" height="17" fill="none" stroke="#777" stroke-width="1.2" />
<text x="1215.8" y="300.82" font-size="18.3" fill="#252423" text-anchor="start" textLength="86.6" lengthAdjust="spacingAndGlyphs" >Agriculture</text>
<rect x="1189" y="318.34" width="17" height="17" fill="none" stroke="#777" stroke-width="1.2" />
<text x="1215.8" y="333.44" font-size="18.3" fill="#252423" text-anchor="start" textLength="58.5" lengthAdjust="spacingAndGlyphs" >Biology</text>
<rect x="1189" y="350.96" width="17" height="17" fill="none" stroke="#777" stroke-width="1.2" />
<text x="1215.8" y="366.06" font-size="18.3" fill="#252423" text-anchor="start" textLength="78.8" lengthAdjust="spacingAndGlyphs" >Chemistry</text>
<rect x="1189" y="383.58" width="17" height="17" fill="none" stroke="#777" stroke-width="1.2" />
<text x="1215.8" y="398.68" font-size="18.3" fill="#252423" text-anchor="start" textLength="31" lengthAdjust="spacingAndGlyphs" >Civil</text>
<rect x="1189" y="416.2" width="17" height="17" fill="none" stroke="#777" stroke-width="1.2" />
<text x="1215.8" y="431.3" font-size="18.3" fill="#252423" text-anchor="start" textLength="78.8" lengthAdjust="spacingAndGlyphs" >Computer</text>
<path d="M1210,445.31999999999994 C1240,441.31999999999994 1270,442.31999999999994 1290,443.31999999999994 L1304,444.31999999999994 L1304,463.31999999999994 C1280,463.31999999999994 1240,465.31999999999994 1212,469.31999999999994 z" stroke="none" stroke-width="1" fill="#e8e600" />
<rect x="1188.5" y="448.31999999999994" width="17.5" height="17.5" fill="#252423" />
<text x="1215.8" y="463.91999999999996" font-size="18.3" fill="#252423" text-anchor="start" textLength="68.4" lengthAdjust="spacingAndGlyphs" >Electrical</text>
<rect x="1189" y="481.43999999999994" width="17" height="17" fill="none" stroke="#777" stroke-width="1.2" />
<text x="1215.8" y="496.53999999999996" font-size="18.3" fill="#252423" text-anchor="start" textLength="58.6" lengthAdjust="spacingAndGlyphs" >Fashion</text>
<rect x="1189" y="514.06" width="17" height="17" fill="none" stroke="#777" stroke-width="1.2" />
<text x="1215.8" y="529.16" font-size="18.3" fill="#252423" text-anchor="start" textLength="12" lengthAdjust="spacingAndGlyphs" >IT</text>
<rect x="1189" y="546.68" width="17" height="17" fill="none" stroke="#777" stroke-width="1.2" />
<text x="1215.8" y="561.78" font-size="18.3" fill="#252423" text-anchor="start" textLength="26" lengthAdjust="spacingAndGlyphs" >LLB</text>
<rect x="1189" y="579.3" width="17" height="17" fill="none" stroke="#777" stroke-width="1.2" />
<text x="1215.8" y="594.4" font-size="18.3" fill="#252423" text-anchor="start" textLength="88.3" lengthAdjust="spacingAndGlyphs" >Mechanical</text>
<rect x="1189" y="611.92" width="17" height="17" fill="none" stroke="#777" stroke-width="1.2" />
<text x="1215.8" y="627.02" font-size="18.3" fill="#252423" text-anchor="start" textLength="76.7" lengthAdjust="spacingAndGlyphs" >Pharmacy</text>
<rect x="1189" y="644.54" width="17" height="17" fill="none" stroke="#777" stroke-width="1.2" />
<text x="1215.8" y="659.64" font-size="18.3" fill="#252423" text-anchor="start" textLength="55.6" lengthAdjust="spacingAndGlyphs" >Physics</text>
<rect x="136.8" y="718.8" width="272" height="152.5" fill="#e5e5e5" stroke="#505050" stroke-width="1.5" />
<text x="0" y="0" font-size="63" fill="#252423" stroke="#252423" stroke-width="1.6" vector-effect="non-scaling-stroke" transform="translate(200.0,811.2) scale(0.867,0.964)">F</text>
<text x="0" y="0" font-size="63" fill="#252423" stroke="#252423" stroke-width="1.6" vector-effect="non-scaling-stroke" transform="translate(233.7,811.2) scale(0.7,0.88)">a</text>
<text x="0" y="0" font-size="63" fill="#252423" stroke="#252423" stroke-width="1.6" vector-effect="non-scaling-stroke" transform="translate(265.9,811.2) scale(0.82,0.916)">l</text>
<text x="0" y="0" font-size="63" fill="#252423" stroke="#252423" stroke-width="1.6" vector-effect="non-scaling-stroke" transform="translate(283.2,811.2) scale(0.888,0.88)">s</text>
<text x="0" y="0" font-size="63" fill="#252423" stroke="#252423" stroke-width="1.6" vector-effect="non-scaling-stroke" transform="translate(315.4,811.2) scale(0.825,0.88)">e</text>
<text x="272.5" y="845.1" font-size="17.5" fill="#605e5c" text-anchor="middle" textLength="158" lengthAdjust="spacingAndGlyphs" >ISFILTERED Measure</text>
<path d="M398,784.5 C399,792 402,797 407.5,796.5 C420,795 440,782 455,774 C470,766 480,762 491.1,757" stroke="#e3191b" stroke-width="4.3" fill="none" stroke-linecap="round" stroke-linejoin="round"/>
<rect x="1599" y="171" width="10.6" height="675" fill="#8a8a8a" rx="5.3" />
<path d="M1633,173 l-7,7 l7,7 M1640,173 l-7,7 l7,7" stroke="#252423" stroke-width="1.3" fill="none" />
<path d="M1643,207.5 v14.5 l-8.5,-5.8 h-4.8 v-2.9 h4.8 z" stroke="#252423" stroke-width="1.3" fill="none" stroke-linejoin="round"/>
<text x="1627.5" y="232.5" font-size="17.5" fill="#252423" font-weight="700" text-anchor="start" textLength="55" lengthAdjust="spacingAndGlyphs" transform="rotate(90 1627.5 232.5)">Filters</text>
<text x="1664.6" y="188" font-size="19.5" fill="#252423" text-anchor="start" textLength="41" lengthAdjust="spacingAndGlyphs" stroke="#252423" stroke-width="0.9">Data</text>
<circle cx="1826" cy="180" r="1.3" fill="#252423"/>
<circle cx="1833.5" cy="180" r="1.3" fill="#252423"/>
<circle cx="1841" cy="180" r="1.3" fill="#252423"/>
<path d="M1853,173 l7,7 l-7,7 M1860,173 l7,7 l-7,7" stroke="#252423" stroke-width="1.3" fill="none" />
<rect x="1660" y="213.5" width="213" height="29" fill="#ffffff" stroke="#c8c6c4" stroke-width="1" rx="4" />
<line x1="1663" y1="242.5" x2="1870" y2="242.5" stroke="#605e5c" stroke-width="1" />
<circle cx="1683.5" cy="227" r="6" stroke="#252423" stroke-width="1.4" fill="none"/>
<line x1="1688" y1="231.5" x2="1692" y2="236" stroke="#252423" stroke-width="1.5" />
<text x="1701.5" y="235.5" font-size="16" fill="#605e5c" text-anchor="start" textLength="50" lengthAdjust="spacingAndGlyphs" >Search</text>
<path d="M1673.5,263 l6,6 l-6,6" stroke="#444" stroke-width="1.2" fill="none" />
<rect x="1690.7" y="262.7" width="13.6" height="13.6" fill="none" stroke="#252423" stroke-width="1.3" rx="2.5" />
<line x1="1695.2" y1="263" x2="1695.2" y2="276" stroke="#252423" stroke-width="1.1" />
<line x1="1699.8" y1="263" x2="1699.8" y2="276" stroke="#252423" stroke-width="1.1" />
<line x1="1691" y1="267.2" x2="1704" y2="267.2" stroke="#252423" stroke-width="1.1" />
<line x1="1691" y1="271.8" x2="1704" y2="271.8" stroke="#252423" stroke-width="1.1" />
<text x="1713" y="275" font-size="14.3" fill="#252423" text-anchor="start" textLength="83" lengthAdjust="spacingAndGlyphs" >Branch Table</text>
<path d="M1671,294 l6.5,6.5 l6.5,-6.5" stroke="#444" stroke-width="1.2" fill="none" />
<rect x="1690.7" y="292.7" width="13.6" height="13.6" fill="none" stroke="#252423" stroke-width="1.3" rx="2.5" />
<line x1="1695.2" y1="293" x2="1695.2" y2="306" stroke="#252423" stroke-width="1.1" />
<line x1="1699.8" y1="293" x2="1699.8" y2="306" stroke="#252423" stroke-width="1.1" />
<line x1="1691" y1="297.2" x2="1704" y2="297.2" stroke="#252423" stroke-width="1.1" />
<line x1="1691" y1="301.8" x2="1704" y2="301.8" stroke="#252423" stroke-width="1.1" />
<text x="1713" y="305" font-size="14.3" fill="#252423" text-anchor="start" textLength="95" lengthAdjust="spacingAndGlyphs" >Students Table</text>
<rect x="1709.5" y="322" width="14.5" height="14.5" fill="#ffffff" stroke="#8a8886" stroke-width="1" rx="2" />
<path d="M1748,322 h-13 l6,7 l-6,7 h13" stroke="#252423" stroke-width="1.3" fill="none" />
<text x="1757" y="334.8" font-size="14.3" fill="#252423" text-anchor="start" textLength="73" lengthAdjust="spacingAndGlyphs" >10th Marks</text>
<rect x="1709.5" y="352" width="14.5" height="14.5" fill="#ffffff" stroke="#8a8886" stroke-width="1" rx="2" />
<path d="M1748,352 h-13 l6,7 l-6,7 h13" stroke="#252423" stroke-width="1.3" fill="none" />
<text x="1757" y="364.8" font-size="14.3" fill="#252423" text-anchor="start" textLength="73" lengthAdjust="spacingAndGlyphs" >12th Marks</text>
<rect x="1709.5" y="382" width="14.5" height="14.5" fill="#ffffff" stroke="#8a8886" stroke-width="1" rx="2" />
<text x="1757" y="394.8" font-size="14.3" fill="#252423" text-anchor="start" textLength="63" lengthAdjust="spacingAndGlyphs" >Branch ID</text>
<rect x="1709.5" y="412" width="14.5" height="14.5" fill="#ffffff" stroke="#8a8886" stroke-width="1" rx="2" />
<path d="M1740,426 h-3 a2,2 0 0 1 -2,-2 v-10 a2,2 0 0 1 2,-2 h8 a2,2 0 0 1 2,2" stroke="#252423" stroke-width="1.2" fill="none" />
<line x1="1738.5" y1="415" x2="1738.5" y2="424" stroke="#252423" stroke-width="1" />
<line x1="1737.5" y1="414.7" x2="1746.5" y2="414.7" stroke="#252423" stroke-width="1" />
<line x1="1747" y1="414" x2="1747" y2="417" stroke="#252423" stroke-width="1.2" />
<path d="M1745,416 c-2,0 -2,1 -2.5,3 l-1.5,7 c-0.5,2 -1,3 -3,3 M1741,419 h4" stroke="#252423" stroke-width="1.1" fill="none" />
<path d="M1746,422 l4,5 M1750,422 l-4,5" stroke="#252423" stroke-width="1.3" fill="none" />
<text x="1757" y="424.8" font-size="14.3" fill="#252423" text-anchor="start" textLength="51" lengthAdjust="spacingAndGlyphs" >Column</text>
<rect x="1709.5" y="442" width="14.5" height="14.5" fill="#ffffff" stroke="#8a8886" stroke-width="1" rx="2" />
<path d="M1740,456 h-3 a2,2 0 0 1 -2,-2 v-10 a2,2 0 0 1 2,-2 h8 a2,2 0 0 1 2,2" stroke="#252423" stroke-width="1.2" fill="none" />
<line x1="1738.5" y1="445" x2="1738.5" y2="454" stroke="#252423" stroke-width="1" />
<line x1="1737.5" y1="444.7" x2="1746.5" y2="444.7" stroke="#252423" stroke-width="1" />
<line x1="1747" y1="444" x2="1747" y2="447" stroke="#252423" stroke-width="1.2" />
<path d="M1745,446 c-2,0 -2,1 -2.5,3 l-1.5,7 c-0.5,2 -1,3 -3,3 M1741,449 h4" stroke="#252423" stroke-width="1.1" fill="none" />
<path d="M1746,452 l4,5 M1750,452 l-4,5" stroke="#252423" stroke-width="1.3" fill="none" />
<text x="1757" y="454.8" font-size="14.3" fill="#252423" text-anchor="start" textLength="63.4" lengthAdjust="spacingAndGlyphs" >Column 2</text>
<rect x="1709.5" y="472" width="14.5" height="14.5" fill="#ffffff" stroke="#8a8886" stroke-width="1" rx="2" />
<path d="M1740,486 h-3 a2,2 0 0 1 -2,-2 v-10 a2,2 0 0 1 2,-2 h8 a2,2 0 0 1 2,2" stroke="#252423" stroke-width="1.2" fill="none" />
<line x1="1738.5" y1="475" x2="1738.5" y2="484" stroke="#252423" stroke-width="1" />
<line x1="1737.5" y1="474.7" x2="1746.5" y2="474.7" stroke="#252423" stroke-width="1" />
<line x1="1747" y1="474" x2="1747" y2="477" stroke="#252423" stroke-width="1.2" />
<path d="M1752,480 h-8 l3,3.5 l-3,3.5 h8" stroke="#252423" stroke-width="1.1" fill="none" />
<text x="1757" y="484.8" font-size="14.3" fill="#252423" text-anchor="start" textLength="63.4" lengthAdjust="spacingAndGlyphs" >Column 3</text>
<rect x="1709.5" y="502" width="14.5" height="14.5" fill="#ffffff" stroke="#8a8886" stroke-width="1" rx="2" />
<text x="1757" y="514.8" font-size="14.3" fill="#252423" text-anchor="start" textLength="52" lengthAdjust="spacingAndGlyphs" >Country</text>
<rect x="1709.5" y="532" width="14.5" height="14.5" fill="#ffffff" stroke="#8a8886" stroke-width="1" rx="2" />
<text x="1757" y="544.8" font-size="14.3" fill="#252423" text-anchor="start" textLength="35" lengthAdjust="spacingAndGlyphs" >Email</text>
<rect x="1709.5" y="562" width="14.5" height="14.5" fill="#ffffff" stroke="#8a8886" stroke-width="1" rx="2" />
<rect x="1735.5" y="562.5" width="13" height="13" fill="none" stroke="#252423" stroke-width="1.2" rx="2" />
<line x1="1735.5" y1="566" x2="1748.5" y2="566" stroke="#252423" stroke-width="1.2" />
<rect x="1738" y="569" width="1.5" height="1.5" fill="#252423" />
<rect x="1741" y="569" width="1.5" height="1.5" fill="#252423" />
<rect x="1744" y="569" width="1.5" height="1.5" fill="#252423" />
<rect x="1738" y="572" width="1.5" height="1.5" fill="#252423" />
<rect x="1741" y="572" width="1.5" height="1.5" fill="#252423" />
<rect x="1744" y="572" width="1.5" height="1.5" fill="#252423" />
<path d="M1693.5,563 l6,6 l-6,6" stroke="#444" stroke-width="1.2" fill="none" />
<text x="1757" y="574.8" font-size="14.3" fill="#252423" text-anchor="start" textLength="106" lengthAdjust="spacingAndGlyphs" >Enrollment Date</text>
<rect x="1709.5" y="592" width="14.5" height="14.5" fill="#ffffff" stroke="#8a8886" stroke-width="1" rx="2" />
<path d="M1748,592 h-13 l6,7 l-6,7 h13" stroke="#252423" stroke-width="1.3" fill="none" />
<text x="1757" y="604.8" font-size="14.3" fill="#252423" text-anchor="start" textLength="115" lengthAdjust="spacingAndGlyphs" >Graduation Mar...</text>
<rect x="1709.5" y="622" width="14.5" height="14.5" fill="#ffffff" stroke="#8a8886" stroke-width="1" rx="2" />
<rect x="1735.5" y="621.5" width="12" height="15" fill="none" stroke="#252423" stroke-width="1.3" rx="2" />
<rect x="1738" y="624" width="7" height="3" fill="#252423" />
<rect x="1737.8" y="628.5" width="1.6" height="1.6" fill="#252423" />
<rect x="1740.6" y="628.5" width="1.6" height="1.6" fill="#252423" />
<rect x="1743.3999999999999" y="628.5" width="1.6" height="1.6" fill="#252423" />
<rect x="1737.8" y="631.1" width="1.6" height="1.6" fill="#252423" />
<rect x="1740.6" y="631.1" width="1.6" height="1.6" fill="#252423" />
<rect x="1743.3999999999999" y="631.1" width="1.6" height="1.6" fill="#252423" />
<rect x="1737.8" y="633.7" width="1.6" height="1.6" fill="#252423" />
<rect x="1740.6" y="633.7" width="1.6" height="1.6" fill="#252423" />
<rect x="1743.3999999999999" y="633.7" width="1.6" height="1.6" fill="#252423" />
<text x="1757" y="634.8" font-size="14.3" fill="#252423" text-anchor="start" textLength="115" lengthAdjust="spacingAndGlyphs" >ISFILTERED Mea...</text>
<rect x="1709.5" y="652" width="14.5" height="14.5" fill="#ffffff" stroke="#8a8886" stroke-width="1" rx="2" />
<text x="1757" y="664.8" font-size="14.3" fill="#252423" text-anchor="start" textLength="39" lengthAdjust="spacingAndGlyphs" >Name</text>
<rect x="1709.5" y="682" width="14.5" height="14.5" fill="#ffffff" stroke="#8a8886" stroke-width="1" rx="2" />
<rect x="1735.5" y="681.5" width="12" height="15" fill="none" stroke="#252423" stroke-width="1.3" rx="2" />
<rect x="1738" y="684" width="7" height="3" fill="#252423" />
<rect x="1737.8" y="688.5" width="1.6" height="1.6" fill="#252423" />
<rect x="1740.6" y="688.5" width="1.6" height="1.6" fill="#252423" />
<rect x="1743.3999999999999" y="688.5" width="1.6" height="1.6" fill="#252423" />
<rect x="1737.8" y="691.1" width="1.6" height="1.6" fill="#252423" />
<rect x="1740.6" y="691.1" width="1.6" height="1.6" fill="#252423" />
<rect x="1743.3999999999999" y="691.1" width="1.6" height="1.6" fill="#252423" />
<rect x="1737.8" y="693.7" width="1.6" height="1.6" fill="#252423" />
<rect x="1740.6" y="693.7" width="1.6" height="1.6" fill="#252423" />
<rect x="1743.3999999999999" y="693.7" width="1.6" height="1.6" fill="#252423" />
<text x="1757" y="694.8" font-size="14.3" fill="#252423" text-anchor="start" textLength="90" lengthAdjust="spacingAndGlyphs" >Sum Measure</text>
<rect x="1709.5" y="712" width="14.5" height="14.5" fill="#ffffff" stroke="#8a8886" stroke-width="1" rx="2" />
<path d="M1748,712 h-13 l6,7 l-6,7 h13" stroke="#252423" stroke-width="1.3" fill="none" />
<text x="1757" y="724.8" font-size="14.3" fill="#252423" text-anchor="start" textLength="31" lengthAdjust="spacingAndGlyphs" >Total</text>
<rect x="1709.5" y="742" width="14.5" height="14.5" fill="#ffffff" stroke="#8a8886" stroke-width="1" rx="2" />
<path d="M1748,742 h-13 l6,7 l-6,7 h13" stroke="#252423" stroke-width="1.3" fill="none" />
<text x="1757" y="754.8" font-size="14.3" fill="#252423" text-anchor="start" textLength="100" lengthAdjust="spacingAndGlyphs" >Year of Passout</text>
<path d="M1673.5,773 l6,6 l-6,6" stroke="#444" stroke-width="1.2" fill="none" />
<rect x="1690.7" y="772.7" width="13.6" height="13.6" fill="none" stroke="#252423" stroke-width="1.3" rx="2.5" />
<line x1="1695.2" y1="773" x2="1695.2" y2="786" stroke="#252423" stroke-width="1.1" />
<line x1="1699.8" y1="773" x2="1699.8" y2="786" stroke="#252423" stroke-width="1.1" />
<line x1="1691" y1="777.2" x2="1704" y2="777.2" stroke="#252423" stroke-width="1.1" />
<line x1="1691" y1="781.8" x2="1704" y2="781.8" stroke="#252423" stroke-width="1.1" />
<text x="1713" y="785" font-size="14.3" fill="#252423" text-anchor="start" textLength="88" lengthAdjust="spacingAndGlyphs" >Teacher Table</text>
<rect x="1880" y="156" width="38" height="39" fill="#e6e6e6" />
<path d="M1880.5,156 V194.5 H1918" stroke="#8a8886" stroke-width="1" fill="none" />
<ellipse cx="1900.4" cy="170.5" rx="8.7" ry="3.8" stroke="#252423" stroke-width="1.5" fill="none"/>
<path d="M1891.7,170.5 v13.5 a8.7,3.8 0 0 0 17.4,0 v-13.5" stroke="#252423" stroke-width="1.5" fill="none" />
<path d="M1890.8,227.5 v-13.5 h5.6 v13.5 M1896.4,227.5 v-21.8 h9 v4.5 h5 v3.5" stroke="#333" stroke-width="1.4" fill="none" />
<line x1="1890" y1="227.5" x2="1901" y2="227.5" stroke="#333" stroke-width="1.4" />
<path d="M1901.8,216.354 v9.792 a5.15,1.854 0 0 0 10.3,0 v-9.792" stroke="#d9730d" stroke-width="1.4" fill="#fafafa" />
<ellipse cx="1906.95" cy="216.354" rx="5.15" ry="1.854" stroke="#d9730d" stroke-width="1.4" fill="#fafafa"/>
<path d="M1890.8,266 v-13.5 h5.6 v13.5 M1896.4,258 v-12.5 h9 v4.5 h5" stroke="#333" stroke-width="1.4" fill="none" />
<line x1="1890" y1="266" x2="1896" y2="266" stroke="#333" stroke-width="1.4" />
<path d="M1893,268.5 c3,0 6,-1 7,-4 l11,-11 l1.5,1.5 l-11,11 c-2,3 -5,3 -8.5,2.5 z" stroke="#1e78c8" stroke-width="1.1" fill="#5b9fe0" />
<path d="M1903,308 h-11 v-22.5 h17 v9" stroke="#333" stroke-width="1.4" fill="none" />
<path d="M1896,304 v-6 h3 v-4.5 h3 v3" stroke="#aaa" stroke-width="1.4" fill="none" />
<circle cx="1907" cy="302" r="5.3" stroke="#1e88d2" stroke-width="1.4" fill="#fafafa"/>
<path d="M1907,299 v3 h2.5 M1905,295.5 h4" stroke="#1e88d2" stroke-width="1.2" fill="none" />
<path d="M1893.8,325.8 h12.2 v21 l-6.1,-5.5 l-6.1,5.5 z" stroke="#333" stroke-width="1.4" fill="none" />
<path d="M1890.3,371 a5.5,5.5 0 0 1 9.5,-3.8 M1900.5,373 a5.5,5.5 0 0 1 -9.5,3.8" stroke="#2e8b3e" stroke-width="1.6" fill="none" />
<path d="M1900.5,364 v4 h-4 M1890,380 v-4 h4" stroke="#2e8b3e" stroke-width="1.4" fill="none" />
<path d="M1903,366 h8.5 v9 M1890,381 v6 h11" stroke="#333" stroke-width="1.4" fill="none" />
<path d="M1894,384 v-3 h7 M1903,370 h6" stroke="#999" stroke-width="1.2" fill="none" />
<path d="M1901.5,376.5 h10.5 l-4,4.5 v7 h-2.5 v-7 z" stroke="#333" stroke-width="1.3" fill="#fafafa" />
<rect x="1897" y="405.5" width="14.5" height="13" fill="#fbd38a" stroke="#d9730d" stroke-width="1.4" />
<rect x="1889.5" y="415.8" width="12" height="11.5" fill="#fafafa" stroke="#333" stroke-width="1.4" />
<path d="M1902.2,412 l9.5,9.5 l-4,0.5 l3,5 l-2.2,1.2 l-3,-5 l-3.3,3 z" stroke="#333" stroke-width="1.2" fill="#fafafa" stroke-linejoin="round"/>
<path d="M1889,455.6 h22 M1900,445 v21.5" stroke="#252423" stroke-width="1.6" fill="none" />
<line x1="1880" y1="906.5" x2="1918" y2="906.5" stroke="#e1dfdd" stroke-width="1" />
<circle cx="1900.3" cy="926.2" r="3.6" stroke="#333" stroke-width="1.5" fill="none"/>
<path d="M1895.30,919.20 L1897.09,915.05 A11.6,11.6 0 0 1 1903.51,915.05 L1905.30,919.20 A8.6,8.6 0 0 1 1903.86,918.37 L1908.35,917.85 A11.6,11.6 0 0 1 1911.56,923.40 L1908.86,927.03 A8.6,8.6 0 0 1 1908.86,925.37 L1911.56,929.00 A11.6,11.6 0 0 1 1908.35,934.55 L1903.86,934.03 A8.6,8.6 0 0 1 1905.30,933.20 L1903.51,937.35 A11.6,11.6 0 0 1 1897.09,937.35 L1895.30,933.20 A8.6,8.6 0 0 1 1896.74,934.03 L1892.25,934.55 A11.6,11.6 0 0 1 1889.04,929.00 L1891.74,925.37 A8.6,8.6 0 0 1 1891.74,927.03 L1889.04,923.40 A11.6,11.6 0 0 1 1892.25,917.85 L1896.74,918.37 A8.6,8.6 0 0 1 1895.30,919.20 z" stroke="#333" stroke-width="1.5" fill="none" stroke-linejoin="round"/>
<rect x="66.5" y="911.5" width="22" height="13" fill="none" stroke="#333" stroke-width="1.4" />
<path d="M77.5,925 v3 M72,928.5 h11" stroke="#333" stroke-width="1.4" fill="none" />
<rect x="64" y="937" width="30" height="3" fill="#117865" rx="1.5" />
<rect x="125.5" y="908.5" width="15" height="24" fill="none" stroke="#333" stroke-width="1.4" rx="2" />
<line x1="131" y1="929" x2="135" y2="929" stroke="#333" stroke-width="1.6" />
<path d="M174,918 l-6,5 l6,5 z" stroke="none" stroke-width="1" fill="#c8c6c4" />
<path d="M196,918 l6,5 l-6,5 z" stroke="none" stroke-width="1" fill="#c8c6c4" />
<rect x="210.5" y="902" width="233" height="44" fill="#ffffff" />
<line x1="210.5" y1="902" x2="210.5" y2="946" stroke="#c8c6c4" stroke-width="1" />
<line x1="443.5" y1="902" x2="443.5" y2="946" stroke="#e1dfdd" stroke-width="1" />
<rect x="210.5" y="941" width="233" height="5" fill="#117865" />
<text x="236.6" y="930.3" font-size="15.5" fill="#252423" text-anchor="start" textLength="181" lengthAdjust="spacingAndGlyphs" stroke="#252423" stroke-width="0.55">ISFILTERED DAX Function-I</text>
<rect x="444" y="902" width="231" height="44" fill="#ffffff" />
<text x="469.6" y="930.3" font-size="15.5" fill="#252423" text-anchor="start" textLength="179" lengthAdjust="spacingAndGlyphs" >ISFILTERED DAX Function-II</text>
<rect x="675" y="902" width="48.6" height="44" fill="#117865" />
<path d="M692,922 h14 M699,915 v14" stroke="#ffffff" stroke-width="3" fill="none" />
<text x="5.6" y="967.5" font-size="14.3" fill="#484644" text-anchor="start" textLength="72.5" lengthAdjust="spacingAndGlyphs" >Page 1 of 2</text>
<line x1="1655" y1="961" x2="1661" y2="961" stroke="#444" stroke-width="1.6" />
<line x1="1667" y1="961.5" x2="1792" y2="961.5" stroke="#666" stroke-width="1" />
<rect x="1720" y="955" width="5" height="13" fill="#555" />
<line x1="1729.5" y1="956" x2="1729.5" y2="967" stroke="#666" stroke-width="1" />
<path d="M1798,961 h10 M1803,956 v10" stroke="#444" stroke-width="1.6" fill="none" />
<text x="1825" y="967" font-size="14.3" fill="#605e5c" text-anchor="start" textLength="28" lengthAdjust="spacingAndGlyphs" >90%</text>
<rect x="1877.5" y="954.5" width="21" height="15" fill="none" stroke="#555" stroke-width="1.2" />
<path d="M1881,960 v-3 h3 M1892,957 h3 v3 M1895,964 v3 h-3 M1884,967 h-3 v-3" stroke="#444" stroke-width="1.3" fill="none" />
</svg>
</body></html>
